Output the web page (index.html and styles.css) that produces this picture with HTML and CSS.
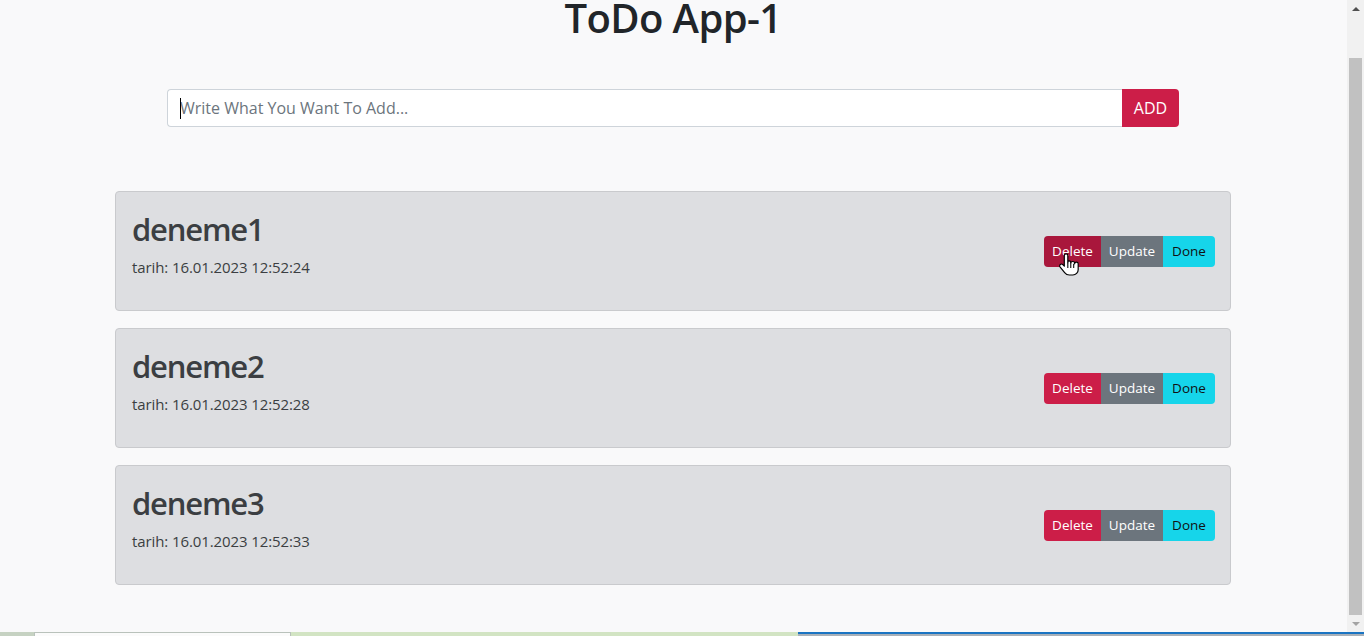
FILE: index.html
```html
<!DOCTYPE html>
<html lang="en">
<head>
<meta charset="utf-8">
<title>ToDo App-1</title>
<link rel="stylesheet" href="styles.css">
</head>
<body>
<div class="page">
  <h1 class="title">ToDo App-1</h1>
  <form class="add-form">
    <div class="input-wrap">
      <input class="add-input" type="text" placeholder="Write What You Want To Add...">
      <span class="caret"></span>
    </div>
    <button class="add-btn" type="button">ADD</button>
  </form>
  <div class="list">
    <div class="card">
      <div class="card-text">
        <h2 class="card-title">deneme1</h2>
        <p class="card-date">tarih: 16.01.2023 12:52:24</p>
      </div>
      <div class="btn-group">
        <button class="btn btn-delete hover" type="button">Delete</button>
        <button class="btn btn-update" type="button">Update</button>
        <button class="btn btn-done" type="button">Done</button>
        <svg class="cursor" width="20" height="26" viewBox="0 0 17 22" aria-hidden="true">
          <path d="M6 1.5c-.8 0-1.5.7-1.5 1.5v9l-1.3-1.3c-.6-.6-1.6-.6-2.2 0-.6.6-.6 1.5 0 2.1l3.8 4.6c1 1.3 2.4 2.1 4 2.1h3c2.5 0 4.5-2 4.5-4.5V10c0-.8-.7-1.5-1.5-1.5s-1.5.7-1.5 1.5v-.5c0-.8-.7-1.5-1.5-1.5S10 8.700 10 9.5V9c0-.8-.7-1.5-1.5-1.5S7.5 8.2 7.5 9V3C7.5 2.2 6.8 1.5 6 1.5z" fill="#fff" stroke="#000" stroke-width="1" stroke-linejoin="round"/>
          <path d="M7.5 9v4.5M10 9.5v4M12.5 10v3.5" stroke="#000" stroke-width="0.9" fill="none"/>
        </svg>
      </div>
    </div>
    <div class="card">
      <div class="card-text">
        <h2 class="card-title">deneme2</h2>
        <p class="card-date">tarih: 16.01.2023 12:52:28</p>
      </div>
      <div class="btn-group">
        <button class="btn btn-delete" type="button">Delete</button>
        <button class="btn btn-update" type="button">Update</button>
        <button class="btn btn-done" type="button">Done</button>
      </div>
    </div>
    <div class="card">
      <div class="card-text">
        <h2 class="card-title">deneme3</h2>
        <p class="card-date">tarih: 16.01.2023 12:52:33</p>
      </div>
      <div class="btn-group">
        <button class="btn btn-delete" type="button">Delete</button>
        <button class="btn btn-update" type="button">Update</button>
        <button class="btn btn-done" type="button">Done</button>
      </div>
    </div>
  </div>
</div>

<div class="scrollbar" aria-hidden="true">
  <div class="sb-arrow sb-up"></div>
  <div class="sb-track"><div class="sb-thumb"></div></div>
  <div class="sb-arrow sb-down"></div>
</div>

<div class="taskbar" aria-hidden="true">
  <div class="tb-seg tb-a"></div>
  <div class="tb-seg tb-b"></div>
  <div class="tb-seg tb-c"></div>
  <div class="tb-seg tb-d"></div>
</div>
</body>
</html>
```

FILE: styles.css
```css
* { box-sizing: border-box; }

html, body {
  margin: 0;
  padding: 0;
  height: 100%;
  overflow: hidden;
}

body {
  background: #f9f9fa;
  color: #212529;
  font-family: "Open Sans", "Noto Sans", "DejaVu Sans", sans-serif;
}

.page {
  width: 1346px;
  display: flex;
  flex-direction: column;
  align-items: center;
}

.title {
  margin: 0;
  font-size: 40px;
  line-height: 35px;
  font-weight: 600;
  letter-spacing: -0.6px;
  color: #212529;
}

.add-form {
  margin-top: 54px;
  width: 1012px;
  display: flex;
  height: 38px;
}

.input-wrap {
  position: relative;
  flex: 1;
  display: flex;
}

.add-input {
  flex: 1;
  height: 38px;
  border: 1px solid #ced4da;
  border-right: none;
  border-radius: 4px 0 0 4px;
  background: #fff;
  padding: 6px 12px;
  font-family: inherit;
  font-size: 16px;
  color: #212529;
  outline: none;
}

.add-input::placeholder {
  color: #6c757d;
  opacity: 1;
}

.caret {
  position: absolute;
  left: 13px;
  top: 9px;
  width: 1px;
  height: 21px;
  background: #000;
}

.add-btn {
  width: 57px;
  height: 38px;
  border: none;
  border-radius: 0 4px 4px 0;
  background: #cc1e48;
  color: #fff;
  font-family: inherit;
  font-size: 16px;
  padding: 0;
}

.list {
  margin-top: 64px;
  width: 1116px;
  display: flex;
  flex-direction: column;
  gap: 16.4px;
}

.card {
  height: 120.4px;
  border: 1px solid #c9cacd;
  border-radius: 4px;
  background: #dddee1;
  padding: 16px 15px 16px 16px;
  display: flex;
  justify-content: space-between;
  align-items: center;
}

.card-text {
  align-self: flex-start;
  padding-top: 2px;
}

.card-title {
  margin: 0 0 7px;
  font-size: 31px;
  line-height: 38.4px;
  font-weight: 600;
  letter-spacing: -1.2px;
  color: #3b3e42;
}

.card-date {
  margin: 0;
  font-size: 15px;
  line-height: 24px;
  letter-spacing: -0.1px;
  color: #3b3e42;
}

.btn-group {
  position: relative;
  display: flex;
  margin-top: 1px;
}

.btn {
  height: 31px;
  border: none;
  padding: 0;
  font-family: inherit;
  font-size: 13.5px;
  line-height: 31px;
  text-align: center;
}

.btn-delete {
  width: 57px;
  background: #cc1e48;
  color: #fff;
  border-radius: 4px 0 0 4px;
}

.btn-delete.hover {
  background: #a9173c;
}

.btn-update {
  width: 62px;
  background: #6c757d;
  color: #fff;
}

.btn-done {
  width: 52px;
  background: #16d5ea;
  color: #111;
  border-radius: 0 4px 4px 0;
}

.cursor {
  position: absolute;
  left: 15px;
  top: 16px;
}

.scrollbar {
  position: fixed;
  right: 0;
  top: 0;
  width: 17px;
  height: 632px;
  background: #f1f1f1;
  display: flex;
  flex-direction: column;
}

.sb-arrow {
  height: 17px;
  display: flex;
  align-items: center;
  justify-content: center;
}

.sb-up::before {
  content: "";
  border-left: 4px solid transparent;
  border-right: 4px solid transparent;
  border-bottom: 4px solid #505050;
}

.sb-down::before {
  content: "";
  border-left: 4px solid transparent;
  border-right: 4px solid transparent;
  border-top: 4px solid #a3a3a3;
}

.sb-track {
  flex: 1;
  padding: 41px 2px 0;
}

.sb-thumb {
  height: 557px;
  background: #c1c1c1;
}

.taskbar {
  position: fixed;
  left: 0;
  bottom: 0;
  width: 1364px;
  height: 4px;
  display: flex;
}

.tb-seg { height: 4px; }
.tb-a { width: 34px; background: #c6d2c2; }
.tb-b { width: 257px; background: #fbfbfb; border-top: 1px solid #b9c2bb; border-left: 1px solid #b9c2bb; border-right: 1px solid #b9c2bb; }
.tb-c { width: 507px; background: #d2e4c3; }
.tb-d { flex: 1; background: #a8b0b8; border-top: 2px solid #1a74c2; }
```
